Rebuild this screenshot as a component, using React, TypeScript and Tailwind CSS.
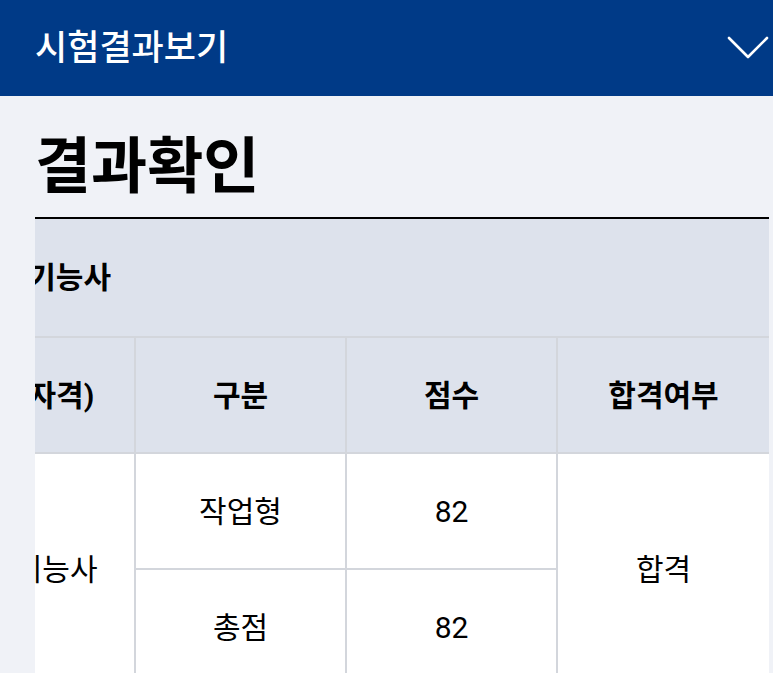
const font = { fontFamily: 'Roboto, "Noto Sans CJK KR", sans-serif' };

export default function App() {
  return (
    <div className="min-h-screen bg-[#f0f2f7] text-black" style={font}>
      <header className="h-[96px] bg-[#003a87] flex items-center justify-between pl-[35px] pr-[4px]">
        <span className="text-white text-[35px] font-medium leading-none">시험결과보기</span>
        <svg width="42" height="24" viewBox="0 0 42 24" fill="none" className="text-white">
          <polyline points="2,2 21,21 40,2" stroke="currentColor" strokeWidth="2.6" strokeLinecap="round" strokeLinejoin="round" />
        </svg>
      </header>

      <main className="pl-[35px] pr-[4px]">
        <h1 className="pt-[35px] pb-[13px] text-[61px] font-bold leading-[73px]">결과확인</h1>

        <div className="border-t-2 border-black overflow-hidden">
          <table className="-ml-[112px] w-[846px] border-collapse table-fixed text-[30px]">
            <colgroup>
              <col className="w-[212px]" />
              <col className="w-[211px]" />
              <col className="w-[211px]" />
              <col className="w-[212px]" />
            </colgroup>
            <thead>
              <tr className="bg-[#dde2ec]">
                <th colSpan={4} className="h-[118px] border-b-2 border-[#d3d6dc] text-left font-bold pl-[50px]">
                  전기기능사
                </th>
              </tr>
              <tr className="bg-[#dde2ec]">
                <th className="h-[116px] border-b-2 border-r-2 border-[#d3d6dc] font-bold">종목(자격)</th>
                <th className="border-b-2 border-r-2 border-[#d3d6dc] font-bold">구분</th>
                <th className="border-b-2 border-r-2 border-[#d3d6dc] font-bold">점수</th>
                <th className="border-b-2 border-[#d3d6dc] font-bold">합격여부</th>
              </tr>
            </thead>
            <tbody className="bg-white">
              <tr>
                <td rowSpan={2} className="border-r-2 border-[#d3d6dc] text-center">전기기능사</td>
                <td className="h-[116px] border-b-2 border-r-2 border-[#d3d6dc] text-center">작업형</td>
                <td className="border-b-2 border-r-2 border-[#d3d6dc] text-center">82</td>
                <td rowSpan={2} className="text-center">합격</td>
              </tr>
              <tr>
                <td className="h-[116px] border-r-2 border-[#d3d6dc] text-center">총점</td>
                <td className="border-r-2 border-[#d3d6dc] text-center">82</td>
              </tr>
            </tbody>
          </table>
        </div>
      </main>
    </div>
  );
}
